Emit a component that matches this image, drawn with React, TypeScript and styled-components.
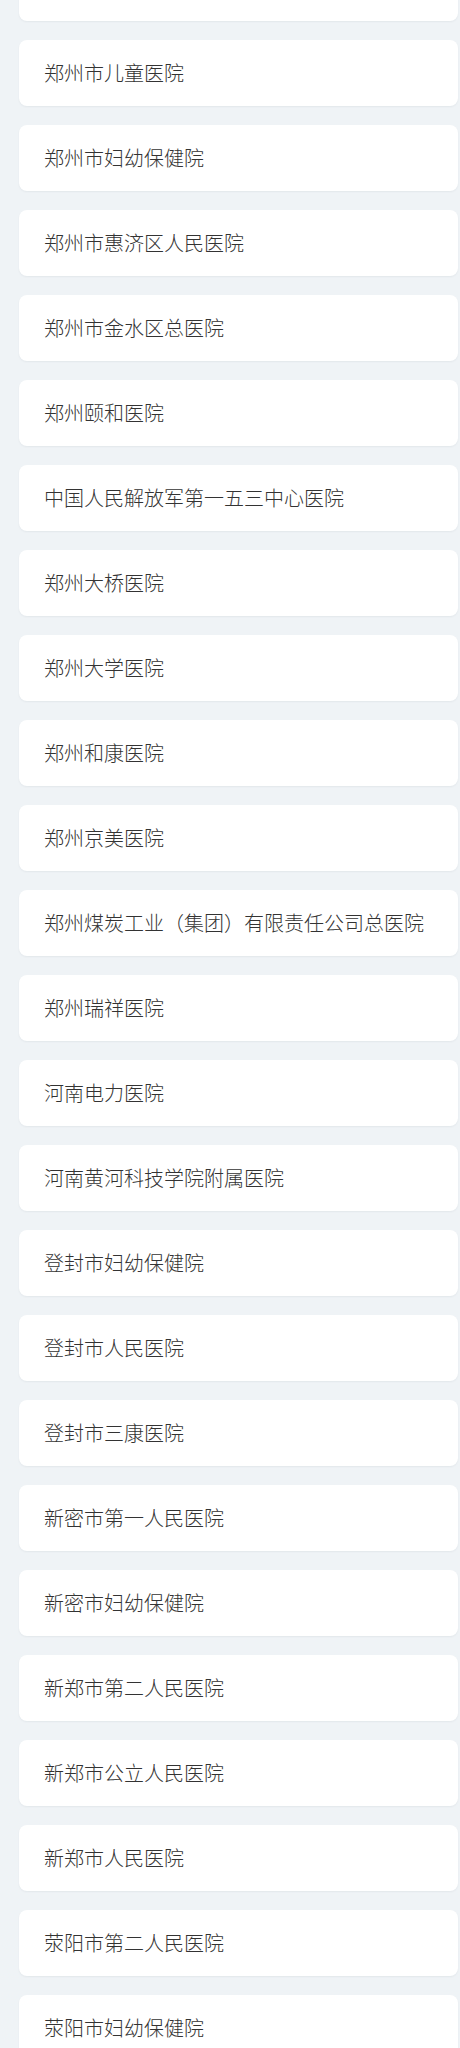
import React from "react";
import styled, { createGlobalStyle } from "styled-components";

const GlobalStyle = createGlobalStyle`
  html, body {
    margin: 0;
    padding: 0;
    background-color: #eff3f6;
  }
  body {
    font-family: "Noto Sans CJK SC", "Noto Sans", sans-serif;
  }
`;

const Page = styled.div`
  width: 460px;
  min-height: 2048px;
  background-color: #eff3f6;
  overflow: hidden;
`;

// the list is scrolled so the first card is cut off at the top
const HospitalList = styled.ul`
  list-style: none;
  margin: -45px 0 0 0;
  padding: 0 2px 0 19px;
  display: flex;
  flex-direction: column;
  gap: 19px;
`;

const HospitalItem = styled.li`
  height: 66px;
  box-sizing: border-box;
  display: flex;
  align-items: center;
  padding: 0 25px;
  background-color: #ffffff;
  border-radius: 8px;
  box-shadow: 0 1px 2px rgba(30, 50, 70, 0.06);
  font-size: 20px;
  font-weight: 300;
  line-height: 1;
  color: #333333;
  white-space: nowrap;
`;

const hospitals = [
  "郑州市第七人民医院",
  "郑州市儿童医院",
  "郑州市妇幼保健院",
  "郑州市惠济区人民医院",
  "郑州市金水区总医院",
  "郑州颐和医院",
  "中国人民解放军第一五三中心医院",
  "郑州大桥医院",
  "郑州大学医院",
  "郑州和康医院",
  "郑州京美医院",
  "郑州煤炭工业（集团）有限责任公司总医院",
  "郑州瑞祥医院",
  "河南电力医院",
  "河南黄河科技学院附属医院",
  "登封市妇幼保健院",
  "登封市人民医院",
  "登封市三康医院",
  "新密市第一人民医院",
  "新密市妇幼保健院",
  "新郑市第二人民医院",
  "新郑市公立人民医院",
  "新郑市人民医院",
  "荥阳市第二人民医院",
  "荥阳市妇幼保健院",
];

const App = () => {
  return (
    <Page>
      <GlobalStyle />
      <HospitalList>
        {hospitals.map((name) => (
          <HospitalItem key={name}>{name}</HospitalItem>
        ))}
      </HospitalList>
    </Page>
  );
};

export default App;
